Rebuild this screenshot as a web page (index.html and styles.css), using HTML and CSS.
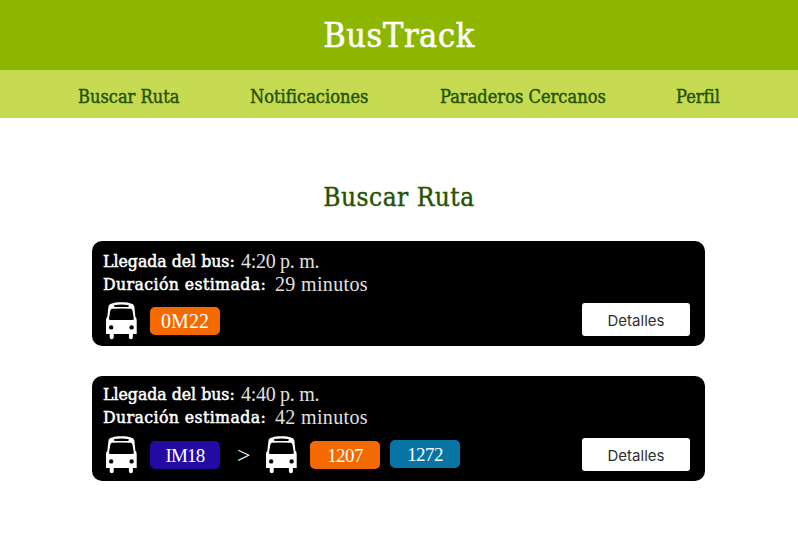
FILE: index.html
```html
<!DOCTYPE html>
<html lang="es">
<head>
<meta charset="utf-8">
<title>BusTrack</title>
<link rel="stylesheet" href="styles.css">
</head>
<body>
<svg width="0" height="0" class="defs" aria-hidden="true">
  <symbol id="bus" viewBox="0.6 0 32 38">
    <path fill="#fff" fill-rule="evenodd" d="M5 2C8 .6 12 .2 16 .2S24 .6 27 2C28.2 2.600 28.700 3.600 29 5L30 15C31 15.500 31.300 17 31.300 19V32H27.500V35.200A2 2 0 0 1 23.500 35.200V32H8.300V35.200A2 2 0 0 1 4.300 35.200V32H.6V19C.6 17 1 15.500 1.900 15L3 5C3.300 3.600 3.800 2.600 5 2ZM9.500 3Q8.500 3.200 8.500 4T9.500 4.900H22.500Q23.500 4.800 23.500 4T22.500 3Q16 2.200 9.500 3ZM7 6.800Q5.200 6.900 4.900 8.700L3.600 16.500Q3.500 18 5 18H27Q28.500 18 28.400 16.500L27.100 8.700Q26.800 6.900 25 6.800Q16 6 7 6.800ZM5.800 23.200A2.200 2.200 0 1 0 5.800 27.600A2.200 2.200 0 1 0 5.800 23.200ZM26.200 23.200A2.200 2.200 0 1 0 26.200 27.600A2.200 2.200 0 1 0 26.200 23.200Z"/>
  </symbol>
</svg>
<header class="header"><h1 class="brand">BusTrack</h1></header>
<nav class="nav">
  <a class="nav-ruta">Buscar Ruta</a>
  <a class="nav-notif">Notificaciones</a>
  <a class="nav-parad">Paraderos Cercanos</a>
  <a class="nav-perfil">Perfil</a>
</nav>
<main class="main">
  <h2 class="heading">Buscar Ruta</h2>
  <section class="card">
    <p class="line"><b class="arrival">Llegada del bus:</b><span class="time">4:20 p. m.</span></p>
    <p class="line"><b class="duration">Duración estimada:</b><span class="minutes">29 minutos</span></p>
    <div class="route">
      <svg class="bus"><use href="#bus"/></svg>
      <span class="badge orange">0M22</span>
      <button class="details">Detalles</button>
    </div>
  </section>
  <section class="card second">
    <p class="line"><b class="arrival">Llegada del bus:</b><span class="time">4:40 p. m.</span></p>
    <p class="line"><b class="duration">Duración estimada:</b><span class="minutes">42 minutos</span></p>
    <div class="route">
      <svg class="bus"><use href="#bus"/></svg>
      <span class="badge indigo">IM18</span>
      <span class="arrow">&gt;</span>
      <svg class="bus"><use href="#bus"/></svg>
      <span class="badge orange tight">1207</span>
      <span class="badge blue tight">1272</span>
      <button class="details">Detalles</button>
    </div>
  </section>
</main>
</body>
</html>
```
FILE: styles.css
```css
* { box-sizing: border-box; }
body {
  margin: 0;
  background: #fff;
  font-family: "DejaVu Serif Condensed", "DejaVu Serif", serif;
  font-stretch: condensed;
}
.defs { display: none; }
h1, h2, p { margin: 0; font-weight: 400; white-space: nowrap; }
.header {
  height: 70px;
  background: #8db600;
  color: #fff;
  display: flex;
  justify-content: center;
}
.brand {
  font-size: 34px;
  line-height: 71px;
  letter-spacing: .6px;
  -webkit-text-stroke: .6px;
}
.nav {
  height: 48px;
  padding-left: 78px;
  background: #c6db52;
  color: #255200;
  display: grid;
  grid-template-columns: 172px 190px 236px auto;
  font-size: 18.1px;
  line-height: 54px;
  white-space: nowrap;
  -webkit-text-stroke: .4px;
}
.main { padding: 0 93px 0 92px; }
.heading {
  padding: 59px 0 0 1px;
  height: 123px;
  line-height: 40px;
  font-size: 26px;
  letter-spacing: .5px;
  text-align: center;
  color: #255200;
  -webkit-text-stroke: .4px;
}
.card {
  height: 105px;
  margin-bottom: 30px;
  padding: 9px 15px 0 11px;
  background: #000;
  color: #fff;
  border-radius: 10px;
}
.line { display: flex; height: 23px; line-height: 23px; }
.line b { font-weight: 400; font-size: 17.5px; -webkit-text-stroke: .5px; }
.arrival { width: 138px; }
.line .duration { width: 172px; letter-spacing: .4px; }
.line span { font-family: "Liberation Serif", serif; font-size: 20px; color: #e0e0e0; }
.line .time { letter-spacing: -.3px; }
.line .minutes { letter-spacing: .35px; }
.route { display: flex; align-items: flex-start; padding: 6px 0 0 3px; }
.bus { width: 32px; height: 38px; flex: none; }
.badge {
  width: 70px;
  height: 28px;
  margin: 5px 0 0 12px;
  border-radius: 5px;
  text-align: center;
  font: 20px/29px "Liberation Serif", serif;
}
.orange { background: #f56a00; }
.indigo { background: #220aa3; font-size: 19px; letter-spacing: -.8px; }
.blue { background: #0874a5; }
.tight { font-size: 19px; letter-spacing: -.6px; }
.details {
  width: 108px;
  height: 33px;
  margin: 1px 0 0 auto;
  padding: 2px 0 0;
  border: 0;
  border-radius: 3px;
  background: #fff;
  color: #303030;
  font: 15px/20px Inter, sans-serif;
}
.second { padding-top: 7px; margin-bottom: 0; }
.second .route { padding-top: 7px; }
.second .details { margin-top: 2px; }
.arrow { width: 14px; margin: 5px 15px 0 17px; font: 24px/28px "Liberation Serif", serif; }
.badge.blue { margin-top: 4px; margin-left: 10px; }
```
